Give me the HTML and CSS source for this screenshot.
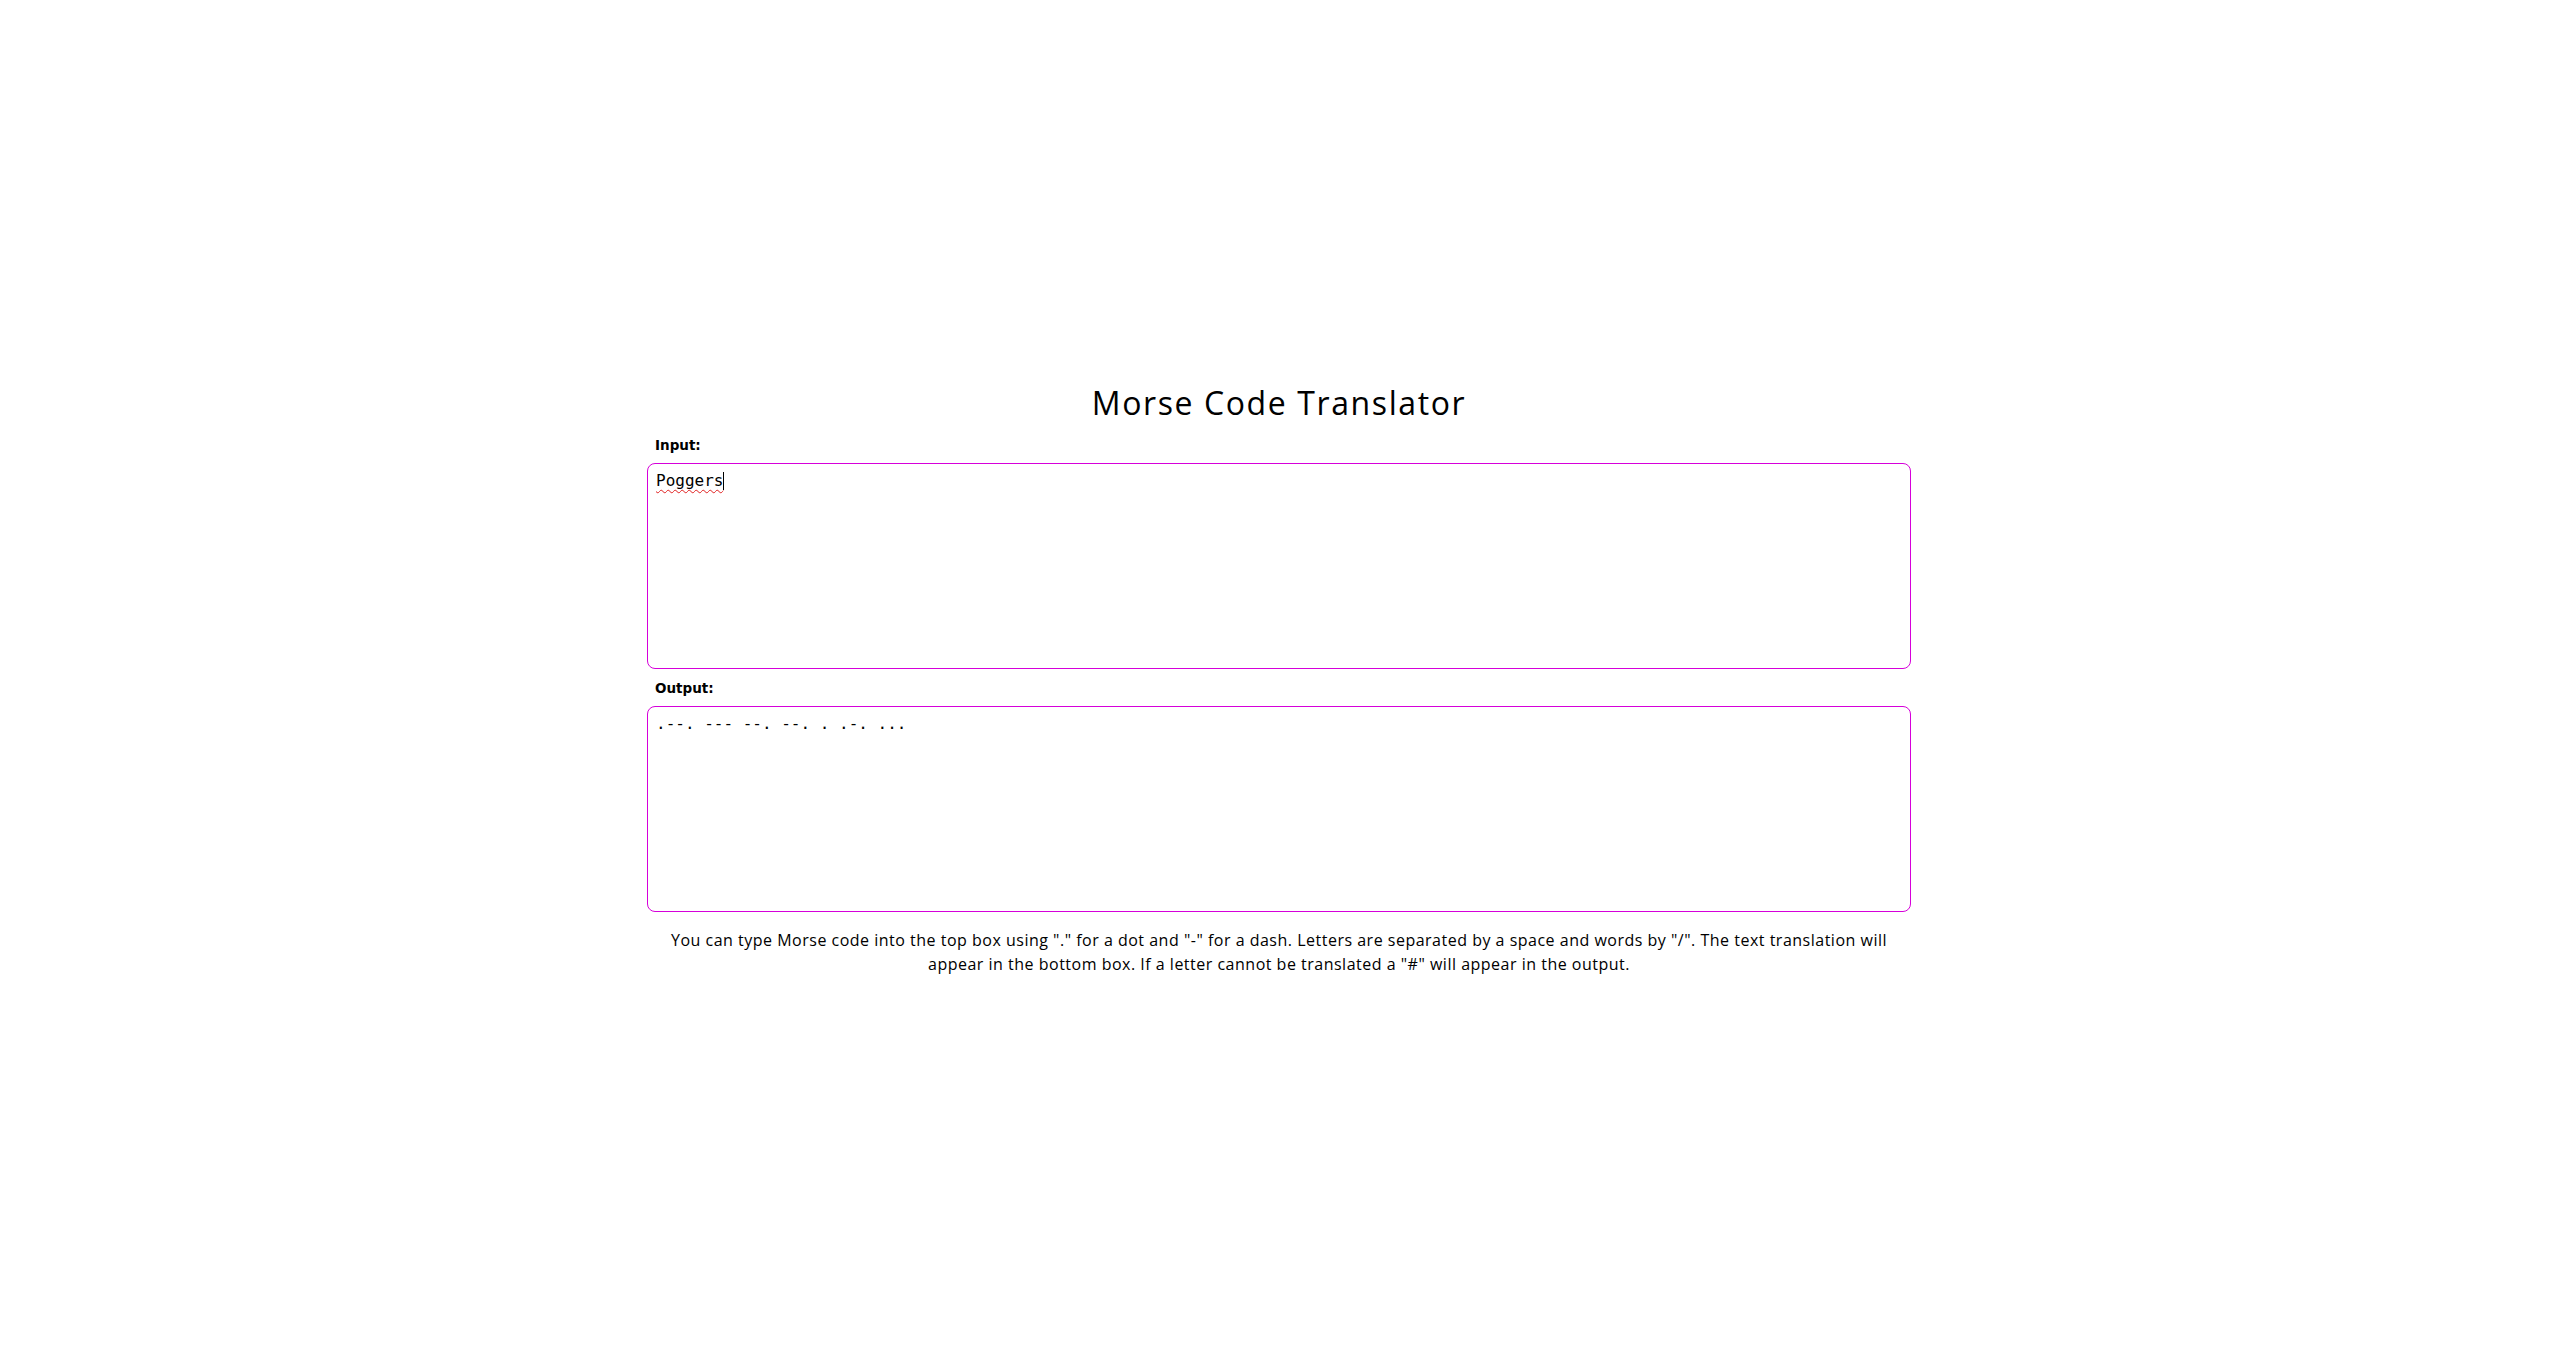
FILE: index.html
```html
<!DOCTYPE html>
<html lang="en">
<head>
<meta charset="utf-8">
<title>Morse Code Translator</title>
<link rel="stylesheet" href="styles.css">
</head>
<body>
<main class="page">
  <section class="translator">
    <h1 class="title">Morse Code Translator</h1>
    <label class="field-label" for="input">Input:</label>
    <div class="box box-input" id="input"><span class="misspelled">Poggers</span><span class="caret"></span></div>
    <label class="field-label field-label-output" for="output">Output:</label>
    <textarea class="box" id="output" readonly>.--. --- --. --. . .-. ...</textarea>
    <p class="help">You can type Morse code into the top box using "." for a dot and "-" for a dash. Letters are separated by a space and words by "/". The text translation will appear in the bottom box. If a letter cannot be translated a "#" will appear in the output.</p>
  </section>
</main>
</body>
</html>
```
FILE: styles.css
```css
html, body {
  margin: 0;
  padding: 0;
  background: #ffffff;
}

.page {
  box-sizing: border-box;
  min-height: 100vh;
  padding-top: 4px;
  display: flex;
  align-items: center;
  justify-content: center;
}

.translator {
  width: 1264px;
  display: flex;
  flex-direction: column;
  font-family: "Open Sans", "DejaVu Sans", sans-serif;
  color: #000;
}

.title {
  margin: 0 0 12px;
  font-size: 32px;
  line-height: 40px;
  font-weight: 400;
  letter-spacing: 1.6px;
  text-align: center;
}

.field-label {
  display: block;
  padding-left: 8px;
  margin-bottom: 8px;
  font-family: "DejaVu Sans", sans-serif;
  font-weight: bold;
  font-size: 13.5px;
  line-height: 20px;
}

.field-label-output {
  margin-top: 9px;
}

.box {
  box-sizing: border-box;
  width: 1264px;
  height: 206px;
  margin: 0;
  padding: 7px 8px;
  border: 1px solid #d600da;
  border-radius: 8px;
  font-family: "DejaVu Sans Mono", monospace;
  font-size: 16px;
  line-height: 20px;
  color: #000;
  background: #fff;
  resize: none;
  outline: none;
  display: block;
}

.misspelled {
  text-decoration: underline wavy #e02020;
  text-decoration-thickness: 1px;
  text-underline-offset: 3px;
}

.caret {
  display: inline-block;
  width: 1px;
  height: 18px;
  background: #000;
  vertical-align: -4px;
}

.help {
  margin: 16px 0 0;
  padding: 0 20px;
  font-size: 16px;
  line-height: 24px;
  letter-spacing: 0.5px;
  text-align: center;
}
```
